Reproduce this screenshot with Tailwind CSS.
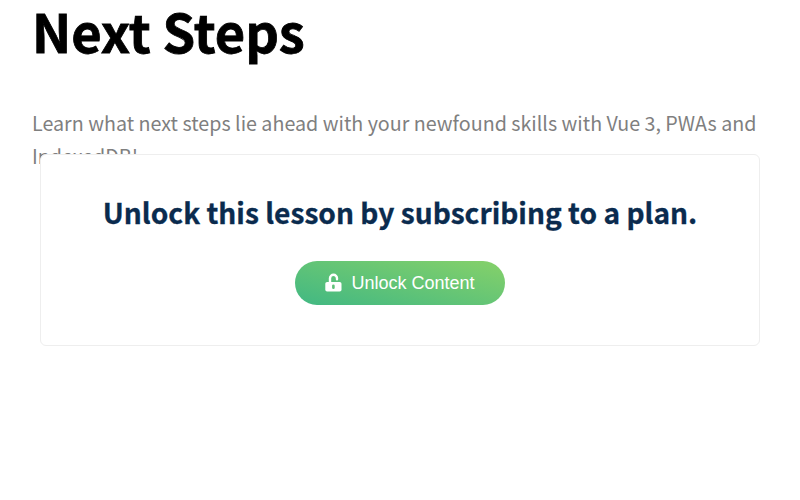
<!DOCTYPE html>
<html lang="en">
<head>
<meta charset="utf-8">
<title>Next Steps</title>
<script src="https://cdn.jsdelivr.net/npm/@tailwindcss/browser@4"></script>
</head>
<body class="bg-white overflow-hidden font-['Noto_Sans_CJK_JP','Noto_Sans',sans-serif]">
<main class="relative h-[500px] w-[800px] px-8">
<h1 class="h-[68px] whitespace-nowrap text-[52.4px] leading-[61px] font-bold text-black [-webkit-text-stroke:0.8px_black]">Next Steps</h1>
<p class="mt-[38px] text-[19.7px] leading-[33px] text-[#7f7f7f] whitespace-nowrap">Learn what next steps lie ahead with your newfound skills with Vue 3, PWAs and<br>IndexedDB!</p>
<section class="absolute left-10 top-[154px] flex h-[192px] w-[720px] flex-col items-center rounded-md border border-[#eee] bg-white pt-[38px]">
<h2 class="whitespace-nowrap text-[28.15px] leading-[38px] font-bold text-[#0a2b4e] [-webkit-text-stroke:0.3px_#0a2b4e]">Unlock this lesson by subscribing to a plan.</h2>
<button class="mt-[30px] flex h-11 w-[210px] items-center justify-center gap-[9px] rounded-full bg-linear-[14deg] from-[#41b883] to-[#86d169] font-['Liberation_Sans',sans-serif] text-[18px] text-white">
<svg class="h-[18px] w-[17px] overflow-visible" viewBox="0 0 17 18" fill="none"><path d="M5 9V4.3a3.5 3.5 0 0 1 7 0v1" stroke="white" stroke-width="2.4" stroke-linecap="round"/><rect x=".3" y="8" width="16.2" height="9.6" rx="1.8" fill="white"/><rect x="7.1" y="10.5" width="2.6" height="4.6" rx="1.3" fill="#5fc178"/></svg>
<span>Unlock Content</span></button>
</section>
</main>
</body>
</html>
